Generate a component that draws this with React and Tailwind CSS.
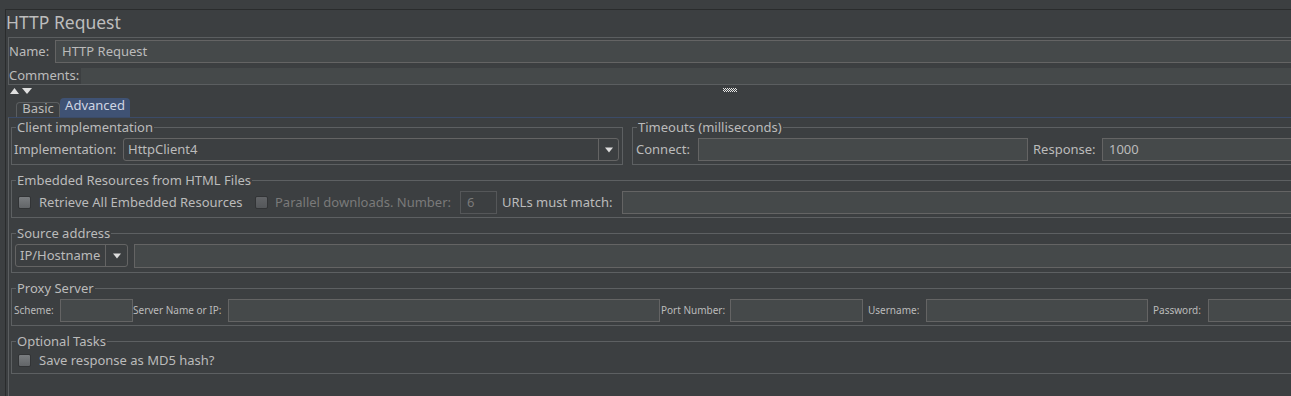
import React from "react";

const Arrow = () => (
  <svg width="8" height="6" viewBox="0 0 8 6">
    <path d="M0 0.5H8L4 5.5Z" fill="#dddddd" />
  </svg>
);

const Field = ({ className = "", dim, children }) => (
  <div
    className={`h-[23px] shrink-0 flex items-center px-[6px] border whitespace-nowrap ${
      dim
        ? "bg-[#3c3f41] border-[#555759] text-[#7a7a7a]"
        : "bg-[#45494a] border-[#646464] text-[#bbbbbb]"
    } ${className}`}
  >
    {children}
  </div>
);

const Check = ({ dim }) => (
  <span
    className={`shrink-0 w-[13px] h-[13px] rounded-[2px] border border-[#323436] bg-linear-to-b ${
      dim ? "from-[#626467] to-[#54575a]" : "from-[#7a7d80] to-[#626568]"
    }`}
  />
);

const Combo = ({ value, className = "", arrowW = "w-[20px]" }) => (
  <div className={`h-[23px] flex rounded-[3px] border border-[#646464] ${className}`}>
    <div className="flex-1 flex items-center pl-[4px] whitespace-nowrap overflow-hidden">{value}</div>
    <div className={`${arrowW} shrink-0 border-l border-[#646464] flex items-center justify-center`}>
      <Arrow />
    </div>
  </div>
);

// titled border, like Swing's TitledBorder
const Group = ({ title, className = "", children }) => (
  <fieldset className={`border border-[#5d6062] ${className}`}>
    <legend className="ml-[4px] px-[1px] text-[13px] leading-[16px] text-[#bbbbbb] whitespace-nowrap">
      {title}
    </legend>
    {children}
  </fieldset>
);

const Grip = () => {
  const cells = [];
  for (let y = 0; y < 4; y++) {
    for (let x = 0; x < 14; x++) {
      if ((x + y) % 2 === 0) cells.push(<rect key={`${x}-${y}`} x={x} y={y} width="1" height="1" fill="#e6e6e6" />);
    }
  }
  return (
    <svg width="14" height="4" viewBox="0 0 14 4">
      {cells}
    </svg>
  );
};

const Label = ({ w, className = "", children }) => (
  <span className={`${w} shrink-0 whitespace-nowrap ${className}`}>{children}</span>
);

export default function App() {
  return (
    <div className="w-[1291px] h-[396px] overflow-hidden bg-[#3c3f41] pt-[9px] font-['Noto_Sans',sans-serif] text-[13px] text-[#bbbbbb]">
      <div className="ml-[5px] w-[1310px] h-[387px] border-t border-l border-[#2a2c2d] flex flex-col">
        {/* title */}
        <div className="h-[27px] pt-[2px] leading-[21px] text-[17.5px] text-[#bdbdbd]">HTTP Request</div>

        {/* name / comments */}
        <div className="ml-[2px] h-[48px] border-t border-l border-b border-[#5b5e60] flex flex-col">
          <div className="mt-[2px] flex items-center">
            <Label w="w-[46px]">Name:</Label>
            <Field className="flex-1">HTTP Request</Field>
          </div>
          <div className="mt-[5px] h-[16px] flex items-center">
            <Label w="w-[72px]">Comments:</Label>
            <div className="flex-1 h-full bg-[#45494a]" />
          </div>
        </div>

        {/* splitter arrows */}
        <div className="h-[12px] flex items-start pt-[3px] pl-[4px]">
          <svg width="23" height="6" viewBox="0 0 23 6">
            <path d="M0 6L4.5 0L9 6Z" fill="#e0e0e0" />
            <path d="M12 0H22L17 6Z" fill="#e0e0e0" />
          </svg>
          <div className="ml-[690px]">
            <Grip />
          </div>
        </div>

        {/* tabs */}
        <div className="h-[20px] pl-[10px] flex items-end">
          <div className="w-[44px] h-[15px] border-t border-l border-r border-[#5b5e60] rounded-t-[4px] flex items-center justify-center pb-[2px] text-[#bbbbbb]">
            Basic
          </div>
          <div className="w-[70px] h-[19px] bg-[#3f5274] rounded-t-[4px] flex items-center justify-center pb-[3px] text-[#cfd6e4]">
            Advanced
          </div>
        </div>

        {/* tab content */}
        <div className="ml-[2px] flex-1 border-t border-l border-t-[#3b4b68] border-l-[#5b5e60] pl-[2px] pt-[1px] flex flex-col gap-[7px]">
          <div className="flex">
            <Group title="Client implementation" className="w-[612px] shrink-0">
              <div className="mt-[3px] pb-[3px] pl-[2px] pr-[3px] flex items-center">
                <Label w="w-[109px]">Implementation:</Label>
                <Combo value="HttpClient4" className="flex-1" />
              </div>
            </Group>
            <Group title="Timeouts (milliseconds)" className="ml-[9px] flex-1">
              <div className="mt-[3px] pb-[3px] pl-[3px] flex items-center">
                <Label w="w-[62px]">Connect:</Label>
                <Field className="w-[330px]" />
                <Label w="w-[69px]" className="ml-[5px]">Response:</Label>
                <Field className="flex-1">1000</Field>
              </div>
            </Group>
          </div>

          <Group title="Embedded Resources from HTML Files">
            <div className="mt-[3px] pb-[3px] pl-[6px] flex items-center">
              <Check />
              <Label w="w-[216px]" className="ml-[8px]">Retrieve All Embedded Resources</Label>
              <Check dim />
              <Label w="w-[185px]" className="ml-[7px] text-[#7a7a7a]">Parallel downloads. Number:</Label>
              <Field dim className="w-[37px]">6</Field>
              <Label w="w-[120px]" className="ml-[5px]">URLs must match:</Label>
              <Field className="flex-1" />
            </div>
          </Group>

          <Group title="Source address">
            <div className="mt-[3px] pb-[4px] pl-[3px] flex items-start">
              <Combo value="IP/Hostname" className="w-[113px] shrink-0" arrowW="w-[22px]" />
              <Field className="ml-[6px] flex-1 h-[24px]" />
            </div>
          </Group>

          <Group title="Proxy Server">
            <div className="mt-[3px] pb-[3px] pl-[2px] flex items-center text-[10px]">
              <Label w="w-[46px]">Scheme:</Label>
              <Field className="w-[73px]" />
              <Label w="w-[95px]">Server Name or IP:</Label>
              <Field className="w-[432px]" />
              <Label w="w-[69px]" className="ml-[1px]">Port Number:</Label>
              <Field className="w-[133px]" />
              <Label w="w-[58px]" className="ml-[5px]">Username:</Label>
              <Field className="w-[222px]" />
              <Label w="w-[55px]" className="ml-[5px]">Password:</Label>
              <Field className="flex-1" />
            </div>
          </Group>

          <Group title="Optional Tasks">
            <div className="h-[23px] pb-[1px] box-content pl-[6px] flex items-center">
              <Check />
              <span className="ml-[8px] whitespace-nowrap">Save response as MD5 hash?</span>
            </div>
          </Group>
        </div>
      </div>
    </div>
  );
}
